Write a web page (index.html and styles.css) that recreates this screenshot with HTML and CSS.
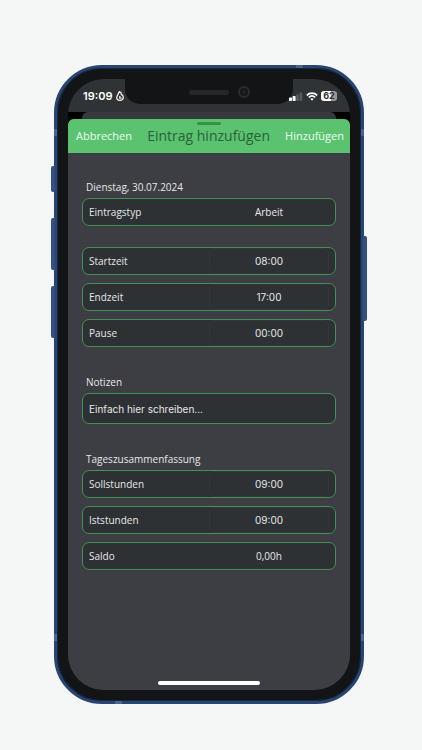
FILE: index.html
```html
<!DOCTYPE html>
<html lang="de">
<head>
    <meta charset="UTF-8">
    <meta name="viewport" content="width=device-width, initial-scale=1.0">
    <title>Eintrag hinzufügen</title>
    <link rel="stylesheet" href="styles.css">
</head>
<body>
    <div class="phone">
        <!-- Hardware buttons and antenna lines -->
        <span class="key mute"></span>
        <span class="key volume-up"></span>
        <span class="key volume-down"></span>
        <span class="key power"></span>
        <span class="band band-left high"></span>
        <span class="band band-left low"></span>
        <span class="band band-right high"></span>
        <span class="band band-right low"></span>
        <span class="band band-top"></span>
        <span class="band band-bottom"></span>

        <div class="screen">
            <div class="notch">
                <span class="speaker"></span>
                <span class="camera"></span>
            </div>

            <div class="status-bar">
                <div class="status-left">
                    <span class="clock">19:09</span>
                    <svg width="8" height="10" viewBox="0 0 8 10" fill="none" stroke="#f0f1f1" stroke-width="1.3" stroke-linejoin="round">
                        <path d="M3.4 .7C5 1.4 5.5 2.5 5.3 3.4C6.7 4.2 7.4 5.4 7.3 6.8C7.2 8.4 5.9 9.3 4 9.3C2.1 9.3 .7 8.5 .7 6.8C.7 5.4 1.4 4.9 1.8 3.8C2.2 2.9 2.6 1.9 3.4 .7Z"/>
                        <path d="M3.8 5V7.2H5.6"/>
                    </svg>
                </div>
                <div class="status-right">
                    <svg width="14" height="9" viewBox="0 0 14 9">
                        <rect x="0" y="5.6" width="3" height="3.4" rx=".7" fill="#fff"/>
                        <rect x="3.6" y="4" width="3" height="5" rx=".7" fill="#fff"/>
                        <rect x="7.2" y="2.2" width="2.6" height="6.8" rx=".7" fill="#595c5f"/>
                        <rect x="10.6" y=".4" width="2.6" height="8.6" rx=".7" fill="#595c5f"/>
                    </svg>
                    <svg width="12" height="9" viewBox="0 0 12 9" fill="none" stroke="#fff" stroke-width="1.7">
                        <path d="M.8 3.3C3.8 .3 8.2 .3 11.2 3.3"/>
                        <path d="M2.8 5.4C4.7 3.6 7.3 3.6 9.2 5.4"/>
                        <path d="M4.3 6.8C5.3 5.9 6.7 5.9 7.7 6.8L6 8.7Z" fill="#fff" stroke="none"/>
                    </svg>
                    <span class="battery">62</span>
                </div>
            </div>

            <div class="backdrop"><div class="card-behind"></div></div>

            <form class="sheet">
                <header class="sheet-header">
                    <span class="grabber"></span>
                    <button type="button" class="action">Abbrechen</button>
                    <h1>Eintrag hinzufügen</h1>
                    <button type="submit" class="action">Hinzufügen</button>
                </header>

                <div class="fields">
                    <section>
                        <h2>Dienstag, 30.07.2024</h2>
                        <div class="row">
                            <label for="typ">Eintragstyp</label>
                            <select id="typ" class="value"><option>Arbeit</option></select>
                        </div>
                    </section>

                    <section class="times">
                        <div class="row">
                            <label for="start">Startzeit</label>
                            <input type="text" id="start" class="value time" value="08:00">
                        </div>
                        <div class="row">
                            <label for="ende">Endzeit</label>
                            <input type="text" id="ende" class="value time" value="17:00">
                        </div>
                        <div class="row">
                            <label for="pause">Pause</label>
                            <input type="text" id="pause" class="value time" value="00:00">
                        </div>
                    </section>

                    <section>
                        <h2><label for="notizen">Notizen</label></h2>
                        <input type="text" id="notizen" class="notes" placeholder="Einfach hier schreiben...">
                    </section>

                    <section>
                        <h2>Tageszusammenfassung</h2>
                        <div class="row">
                            <label for="soll">Sollstunden</label>
                            <input type="text" id="soll" class="value time" value="09:00">
                        </div>
                        <div class="row">
                            <label for="ist">Iststunden</label>
                            <input type="text" id="ist" class="value time" value="09:00">
                        </div>
                        <div class="row">
                            <label for="saldo">Saldo</label>
                            <input type="text" id="saldo" class="value" value="0,00h" readonly>
                        </div>
                    </section>
                </div>
            </form>

            <span class="home-bar"></span>
        </div>
    </div>
</body>
</html>
```
FILE: styles.css
```css
* {
    box-sizing: border-box;
}

body {
    margin: 0;
    min-height: 100vh;
    padding: 65px 58px 46px 54px;
    display: flex;
    background-color: #f5f7f6;
    font-family: "Open Sans", sans-serif;
    color: #e6e7e8;
}

/* Phone body */
.phone {
    position: relative;
    flex: 1;
    display: flex;
    padding: 11px;
    border: 3px solid #27456f;
    border-radius: 48px;
    background-color: #121416;
    box-shadow: inset 0 0 0 1px #14284a;
}

.key {
    position: absolute;
    left: -6px;
    width: 4px;
    border-radius: 2px 0 0 2px;
    background-color: #34507f;
}

.mute {
    top: 98px;
    height: 26px;
}

.volume-up {
    top: 150px;
    height: 52px;
}

.volume-down {
    top: 218px;
    height: 52px;
}

.power {
    top: 168px;
    left: auto;
    right: -6px;
    height: 85px;
    border-radius: 0 2px 2px 0;
}

.band {
    position: absolute;
    width: 3px;
    height: 7px;
    background-color: #4a6386;
}

.band-left {
    left: -3px;
}

.band-right {
    right: -3px;
}

.high {
    top: 61px;
}

.low {
    bottom: 60px;
}

.band-top,
.band-bottom {
    width: 7px;
    height: 3px;
}

.band-top {
    top: -3px;
    right: 58px;
}

.band-bottom {
    bottom: -3px;
    left: 58px;
}

.screen {
    position: relative;
    flex: 1;
    display: flex;
    flex-direction: column;
    overflow: hidden;
    border-radius: 36px;
    background-color: #303336;
}

.notch {
    position: absolute;
    top: 0;
    left: 50%;
    width: 168px;
    height: 25px;
    transform: translateX(-50%);
    border-radius: 0 0 15px 15px;
    background-color: #121416;
}

.speaker {
    position: absolute;
    top: 11px;
    left: 64px;
    width: 40px;
    height: 5px;
    border-radius: 3px;
    background-color: #25282a;
}

.camera {
    position: absolute;
    top: 7px;
    left: 113px;
    width: 12px;
    height: 12px;
    border: 2px solid #292c2f;
    border-radius: 50%;
    background: radial-gradient(circle, #25282b 1px, #15181a 2px);
}

/* Status bar */
.status-bar {
    position: relative;
    display: flex;
    justify-content: space-between;
    height: 33px;
    padding: 1px 13px 0 15px;
}

.status-left,
.status-right {
    display: flex;
    align-items: center;
    gap: 3px;
}

.clock {
    font-family: Inter, sans-serif;
    font-size: 11px;
    font-weight: 600;
    color: #fff;
}

.battery {
    width: 16px;
    height: 10px;
    border-radius: 3px;
    background: linear-gradient(to right, #fff 65%, #96999b 65%);
    color: #303336;
    font-family: Inter, sans-serif;
    font-size: 9px;
    font-weight: 700;
    line-height: 10px;
    text-align: center;
}

.backdrop {
    height: 16px;
    margin-bottom: -9px;
    padding: 0 14px;
    background-color: #000;
}

.card-behind {
    height: 100%;
    border-radius: 6px 6px 0 0;
    background-color: #38393d;
}

/* Sheet */
.sheet {
    flex: 1;
    overflow: hidden;
    border-radius: 6px 6px 0 0;
    background-color: #3c3e43;
}

.sheet-header {
    position: relative;
    display: flex;
    align-items: center;
    justify-content: space-between;
    height: 34px;
    padding: 0 6px 2px 8px;
    background-color: #5bc370;
}

.grabber {
    position: absolute;
    top: 3px;
    left: 50%;
    width: 24px;
    height: 3px;
    transform: translateX(-50%);
    border-radius: 2px;
    background-color: #379149;
}

.sheet-header h1 {
    margin: 0;
    font-size: 14px;
    font-weight: 400;
    color: #28613a;
}

.action {
    padding: 0;
    border: none;
    background: none;
    font-family: inherit;
    font-size: 11px;
    color: #eefbf0;
    cursor: pointer;
}

.fields {
    display: flex;
    flex-direction: column;
    gap: 27px;
    padding: 26px 14px;
}

h2 {
    margin: 0 0 3px 4px;
    font-size: 10px;
    font-weight: 400;
    line-height: 16px;
}

.times {
    margin-top: -6px;
}

.row,
.notes {
    border: 1px solid #468f55;
    border-radius: 7px;
    background-color: #2e3134;
}

.row {
    display: flex;
    align-items: center;
    justify-content: space-between;
    height: 28px;
    padding: 0 6px;
    font-size: 10px;
}

.row + .row {
    margin-top: 8px;
}

.value {
    width: 120px;
    height: 26px;
    padding: 0;
    border: none;
    appearance: none;
    background: none;
    color: inherit;
    font-family: inherit;
    font-size: 10px;
    text-align: center;
    text-align-last: center;
}

.time {
    border: 1px solid #34373a;
    border-radius: 5px;
    font-family: Inter, sans-serif;
}

.notes {
    display: block;
    width: 100%;
    height: 31px;
    padding: 0 6px;
    color: inherit;
    font-family: Inter, sans-serif;
    font-size: 10px;
}

.notes::placeholder {
    color: inherit;
    opacity: 1;
}

.home-bar {
    position: absolute;
    bottom: 5px;
    left: 50%;
    width: 102px;
    height: 4px;
    transform: translateX(-50%);
    border-radius: 2px;
    background-color: #fff;
}
```
